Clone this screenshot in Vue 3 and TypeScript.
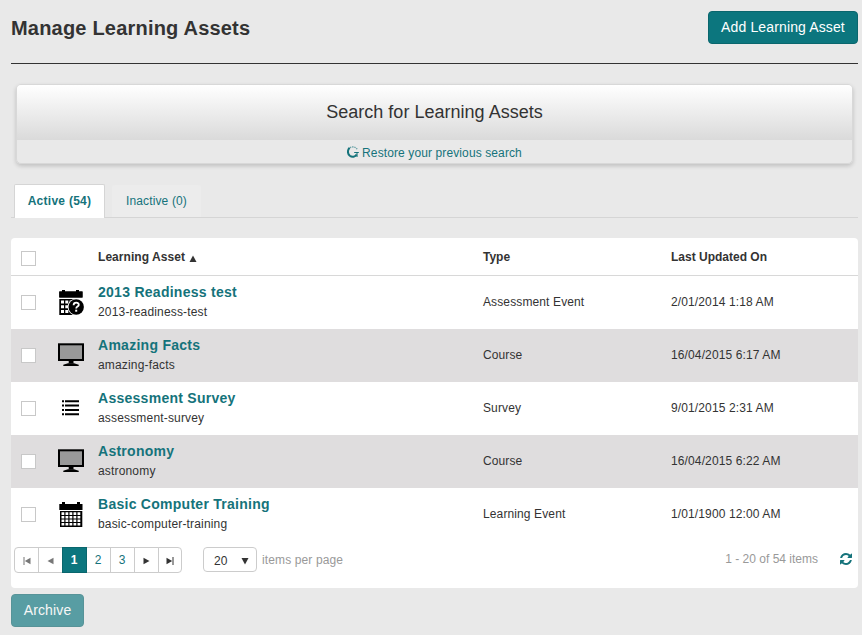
<script setup lang="ts">
import { ref } from 'vue'

type IconName = 'assessment' | 'course' | 'survey' | 'event'

interface Asset {
  name: string
  slug: string
  type: string
  updated: string
  icon: IconName
  selected: boolean
}

const assets = ref<Asset[]>([
  { name: '2013 Readiness test', slug: '2013-readiness-test', type: 'Assessment Event', updated: '2/01/2014 1:18 AM', icon: 'assessment', selected: false },
  { name: 'Amazing Facts', slug: 'amazing-facts', type: 'Course', updated: '16/04/2015 6:17 AM', icon: 'course', selected: false },
  { name: 'Assessment Survey', slug: 'assessment-survey', type: 'Survey', updated: '9/01/2015 2:31 AM', icon: 'survey', selected: false },
  { name: 'Astronomy', slug: 'astronomy', type: 'Course', updated: '16/04/2015 6:22 AM', icon: 'course', selected: false },
  { name: 'Basic Computer Training', slug: 'basic-computer-training', type: 'Learning Event', updated: '1/01/1900 12:00 AM', icon: 'event', selected: false },
])
const tab = ref<'active' | 'inactive'>('active')
const page = ref(1)
const allSelected = ref(false)

function toggleAll() {
  assets.value.forEach((a) => (a.selected = allSelected.value))
}
</script>

<template>
  <main class="page">
    <header class="top">
      <h1>Manage Learning Assets</h1>
      <button class="btn add">Add Learning Asset</button>
    </header>

    <section class="search">
      <h2>Search for Learning Assets</h2>
      <a class="restore">
        <svg width="12" height="12" viewBox="0 0 12 12" fill="none" stroke="#15737b">
          <path d="M2.600 1.800C.4 3.800.3 7.800 2.800 9.800c2.300 1.700 5.400 1.100 6.800-1.300" stroke-width="2" />
          <path d="M3 1.700C5 .4 8.400.7 10.200 3.200" stroke-width="1.300" stroke-dasharray="1.400 .8" opacity=".6" />
          <path d="M7.200 6.500h4.600M10 6.500v4.500" stroke-width="1.100" />
        </svg>
        <span>Restore your previous search</span>
      </a>
    </section>

    <nav class="tabs">
      <button class="tab" :class="{ on: tab === 'active' }" @click="tab = 'active'">Active (54)</button>
      <button class="tab second" :class="{ on: tab === 'inactive' }" @click="tab = 'inactive'">Inactive (0)</button>
    </nav>

    <section class="grid">
      <div class="row head">
        <input v-model="allSelected" type="checkbox" @change="toggleAll" />
        <span></span>
        <span class="sorted">Learning Asset
          <svg width="8" height="7" viewBox="0 0 8 7"><path d="M4 .5 7.500 7H.5z" fill="#333" /></svg>
        </span>
        <span>Type</span>
        <span>Last Updated On</span>
      </div>
      <div v-for="a in assets" :key="a.slug" class="row item">
        <input v-model="a.selected" type="checkbox" />
        <span class="icon">
          <svg v-if="a.icon === 'assessment'" width="28" height="28" viewBox="0 0 28 28">
            <path d="M2.300 3.500H5V2h3v1.500h11V2h3v1.500h3.500v6H2.300zM2.300 11h22v16h-22z" />
            <path d="M4 12.600h3v3H4zM8.300 12.600h3v3h-3zM12.600 12.600h3v3h-3zM4 17.300h3v3H4zM8.300 17.300h3v3h-3zM4 22h3v3H4zM8.300 22h3v3h-3z" fill="#fff" />
            <path d="M18 11h8v16h-8z" fill="#fff" />
            <circle cx="19.200" cy="19" r="8.600" fill="#fff" />
            <path d="M2.300 3.500h23.200v6H2.300z" />
            <circle cx="19.200" cy="19" r="7.700" />
            <path d="M16.600 17.200c0-3.400 5.400-3.200 5.200-.3-.1 1.700-2.600 1.700-2.600 3.500" fill="none" stroke="#fff" stroke-width="1.800" />
            <path d="M18.200 21.700h2v2h-2z" fill="#fff" />
          </svg>
          <svg v-else-if="a.icon === 'course'" width="28" height="28" viewBox="0 0 28 28">
            <path d="M1 2.300h26V20H1z" />
            <path d="M3 4.300h22v13.700H3z" fill="#999" />
            <path d="M11.700 20h4.800v2.500h-4.800z" />
            <path d="M6.300 25v-1.300l4.700-1.400h6l4.700 1.400V25z" />
          </svg>
          <svg v-else-if="a.icon === 'survey'" width="28" height="28" viewBox="0 0 28 28">
            <path d="M5 6.300h2v2H5zM8 6.300h14v2H8zM5 10.600h2v2H5zM8 10.600h14v2H8zM5 15h2v2H5zM8 15h14v2H8zM5 19.300h2v2H5zM8 19.300h14v2H8z" />
          </svg>
          <svg v-else width="28" height="28" viewBox="0 0 28 28">
            <path d="M2.300 4H5V2h3v2h12V2h3v2h2.500v6H2.300zM3 11h22.300v16H3z" />
            <path d="M4.500 12.300h2.800v2.600H4.500zM8.500 12.300h2.800v2.600H8.500zM12.500 12.300h2.800v2.600h-2.800zM16.500 12.300h2.800v2.600h-2.800zM20.500 12.300h2.800v2.600h-2.800zM4.500 16h2.800v2.600H4.500zM8.500 16h2.800v2.600H8.500zM12.500 16h2.800v2.600h-2.800zM16.500 16h2.800v2.600h-2.800zM20.500 16h2.800v2.600h-2.800zM4.500 19.600h2.800v2.300H4.500zM8.500 19.600h2.800v2.300H8.500zM12.500 19.600h2.800v2.300h-2.800zM16.500 19.600h2.800v2.300h-2.800zM20.500 19.600h2.800v2.300h-2.800zM4.500 23.100h2.800v2.300H4.500zM8.500 23.100h2.800v2.300H8.500zM12.500 23.100h2.800v2.300h-2.800zM16.500 23.100h2.800v2.300h-2.800zM20.500 23.100h2.800v2.300h-2.800z" fill="#fff" />
          </svg>
        </span>
        <div class="asset">
          <a class="name">{{ a.name }}</a>
          <span class="slug">{{ a.slug }}</span>
        </div>
        <span class="cell">{{ a.type }}</span>
        <span class="cell">{{ a.updated }}</span>
      </div>

      <footer class="pager">
        <div class="pages">
          <button class="off" aria-label="First page">
            <svg width="8" height="8" viewBox="0 0 8 8"><path d="M.5 0h1v8h-1zM7.500 .7v6.600L1.800 4z" fill="currentColor" /></svg>
          </button>
          <button class="off" aria-label="Previous page">
            <svg width="8" height="8" viewBox="0 0 8 8"><path d="M6.500 .7v6.600L.5 4z" fill="currentColor" /></svg>
          </button>
          <button v-for="n in 3" :key="n" class="num" :class="{ current: n === page }" @click="page = n">{{ n }}</button>
          <button class="arrow" aria-label="Next page">
            <svg width="8" height="8" viewBox="0 0 8 8"><path d="M.5 .7v6.600L6.500 4z" fill="currentColor" /></svg>
          </button>
          <button class="arrow" aria-label="Last page">
            <svg width="8" height="8" viewBox="0 0 8 8"><path d="M6.500 0h1v8h-1zM.5 .7v6.600L6.200 4z" fill="currentColor" /></svg>
          </button>
        </div>
        <button class="size">
          20
          <svg width="8" height="8" viewBox="0 0 8 8"><path d="M.5 1h7L4 7.500z" fill="#333" /></svg>
        </button>
        <span class="per">items per page</span>
        <span class="count">1 - 20 of 54 items</span>
        <svg class="refresh" width="12" height="12" viewBox="0 0 1536 1536">
          <path fill="#15737b" d="M1511 928q0 5-1 7-64 268-268 434.500T764 1536q-146 0-282.500-55T238 1324l-129 129q-19 19-45 19t-45-19-19-45V960q0-26 19-45t45-19h448q26 0 45 19t19 45-19 45l-137 137q71 66 161 102t187 36q134 0 250-65t186-179q11-17 53-117 8-23 30-23h192q13 0 22.500 9.500t9.500 22.500zm25-800v448q0 26-19 45t-45 19h-448q-26 0-45-19t-19-45 19-45l138-138Q969 256 768 256q-134 0-250 65T332 500q-11 17-53 117-8 23-30 23H50q-13 0-22.500-9.500T18 608v-7q65-268 270-434.500T768 0q146 0 284 55.500T1297 212l130-129q19-19 45-19t45 19 19 45z" />
        </svg>
      </footer>
    </section>

    <button class="btn archive">Archive</button>
  </main>
</template>

<style>
body {
  background: #e9e9e9;
}
</style>

<style scoped>
.page {
  box-sizing: border-box;
  height: 635px;
  padding: 11px 4px 0 11px;
  font: 12px/18px "Liberation Sans", Arial, sans-serif;
  color: #333;
}
button {
  font: inherit;
  letter-spacing: inherit;
  margin: 0;
  cursor: pointer;
}
.top {
  display: flex;
  justify-content: space-between;
  height: 52px;
  border-bottom: 1px solid #333;
}
h1 {
  margin: 5px 0 0;
  font-size: 20px;
  line-height: 24px;
  letter-spacing: 0.2px;
}
.btn {
  box-sizing: border-box;
  height: 33px;
  padding: 0 0 2px;
  border: 1px solid #0a666d;
  border-radius: 4px;
  background: #0c767e;
  color: #fff;
  font-size: 14px;
  letter-spacing: 0.13px;
}
.add {
  width: 150px;
}
.search {
  box-sizing: border-box;
  height: 80px;
  margin: 20px 5px 0;
  border: 1px solid #d8d8d8;
  border-radius: 5px;
  box-shadow: 0 2px 4px rgba(0, 0, 0, 0.18);
  overflow: hidden;
  text-align: center;
}
h2 {
  height: 55px;
  margin: 0;
  background: linear-gradient(#fff, #dadada);
  font-size: 18px;
  font-weight: 400;
  line-height: 54px;
  letter-spacing: 0.02px;
}
.restore {
  display: flex;
  justify-content: center;
  align-items: center;
  gap: 3px;
  height: 25px;
  color: #15737b;
  letter-spacing: 0.11px;
}
.restore svg {
  margin-bottom: 2px;
}
.tabs {
  display: flex;
  align-items: flex-end;
  gap: 6px;
  height: 34px;
  margin-top: 20px;
  padding-left: 3px;
  background: linear-gradient(#d5d5d5, #d5d5d5) bottom / 100% 1px no-repeat;
}
.tab {
  box-sizing: border-box;
  width: 91px;
  height: 34px;
  padding: 0 0 1px;
  border: 1px solid transparent;
  border-bottom: 0;
  border-radius: 4px 4px 0 0;
  background: #ececec;
  background-clip: padding-box;
  color: #15737b;
  letter-spacing: 0.13px;
}
.tab.second {
  height: 33px;
  margin-bottom: 1px;
  padding: 0;
}
.tab.on {
  border-color: #d5d5d5;
  border-radius: 2px 2px 0 0;
  background: #fff;
  font-weight: 700;
  letter-spacing: 0.27px;
}
.grid {
  height: 350px;
  margin-top: 20px;
  border-radius: 4px;
  background: #fff;
  overflow: hidden;
}
.row {
  box-sizing: border-box;
  display: grid;
  grid-template-columns: 35px 41px 385px 188px 1fr;
  align-items: center;
  height: 53px;
  padding-left: 11px;
}
.head {
  height: 38px;
  border-bottom: 1px solid #d8d8d8;
  font-weight: 700;
}
.head input {
  margin-top: 3px;
}
.sorted {
  letter-spacing: 0.05px;
}
.sorted svg {
  margin: 0 0 -1px 1px;
}
.item:nth-child(odd) {
  background: #dfddde;
}
input {
  appearance: none;
  box-sizing: border-box;
  width: 15px;
  height: 15px;
  margin: 0 0 0 -1px;
  border: 1px solid #c8c8c8;
  background: #fff;
}
input:checked {
  background: #15737b;
}
.icon {
  display: flex;
  padding-bottom: 1px;
}
.asset {
  display: flex;
  flex-direction: column;
}
.name {
  color: #15737b;
  font-size: 14px;
  font-weight: 700;
  line-height: 19px;
  letter-spacing: 0.27px;
}
.slug {
  line-height: 20px;
  letter-spacing: 0.17px;
}
.cell {
  padding-bottom: 2px;
  letter-spacing: 0.12px;
}
.pager {
  display: flex;
  align-items: flex-start;
  height: 38px;
  padding: 6px 6px 0 3px;
}
.pages {
  display: flex;
  margin-right: 21px;
}
.pages button {
  box-sizing: border-box;
  display: flex;
  align-items: center;
  justify-content: center;
  width: 25px;
  height: 26px;
  margin-right: -1px;
  padding: 2px 0 0;
  border: 1px solid #ccc;
  background: #fff;
  color: #15737b;
}
.pages .num {
  padding: 0 1px 1px 0;
}
.pages button:first-child {
  border-radius: 4px 0 0 4px;
}
.pages button:last-child {
  width: 24px;
  margin-right: 0;
  border-radius: 0 4px 4px 0;
}
.pages .off {
  color: #777;
}
.pages .arrow {
  color: #333;
}
.pages .current {
  position: relative;
  border-color: #0a666d;
  background: #0c767e;
  color: #fff;
  font-weight: 700;
}
.size {
  box-sizing: border-box;
  display: flex;
  align-items: center;
  justify-content: space-between;
  width: 54px;
  height: 25px;
  padding: 2px 7px 0 10px;
  border: 1px solid #ccc;
  border-radius: 4px;
  background: #fff;
  color: #333;
}
.per {
  margin: 4px 0 0 5px;
  color: #999;
  letter-spacing: 0.12px;
}
.count {
  margin: 3px 0 0 auto;
  color: #999;
}
.refresh {
  margin: 6px 0 0 22px;
}
.archive {
  display: block;
  width: 73px;
  margin-top: 6px;
  opacity: 0.65;
}
</style>
